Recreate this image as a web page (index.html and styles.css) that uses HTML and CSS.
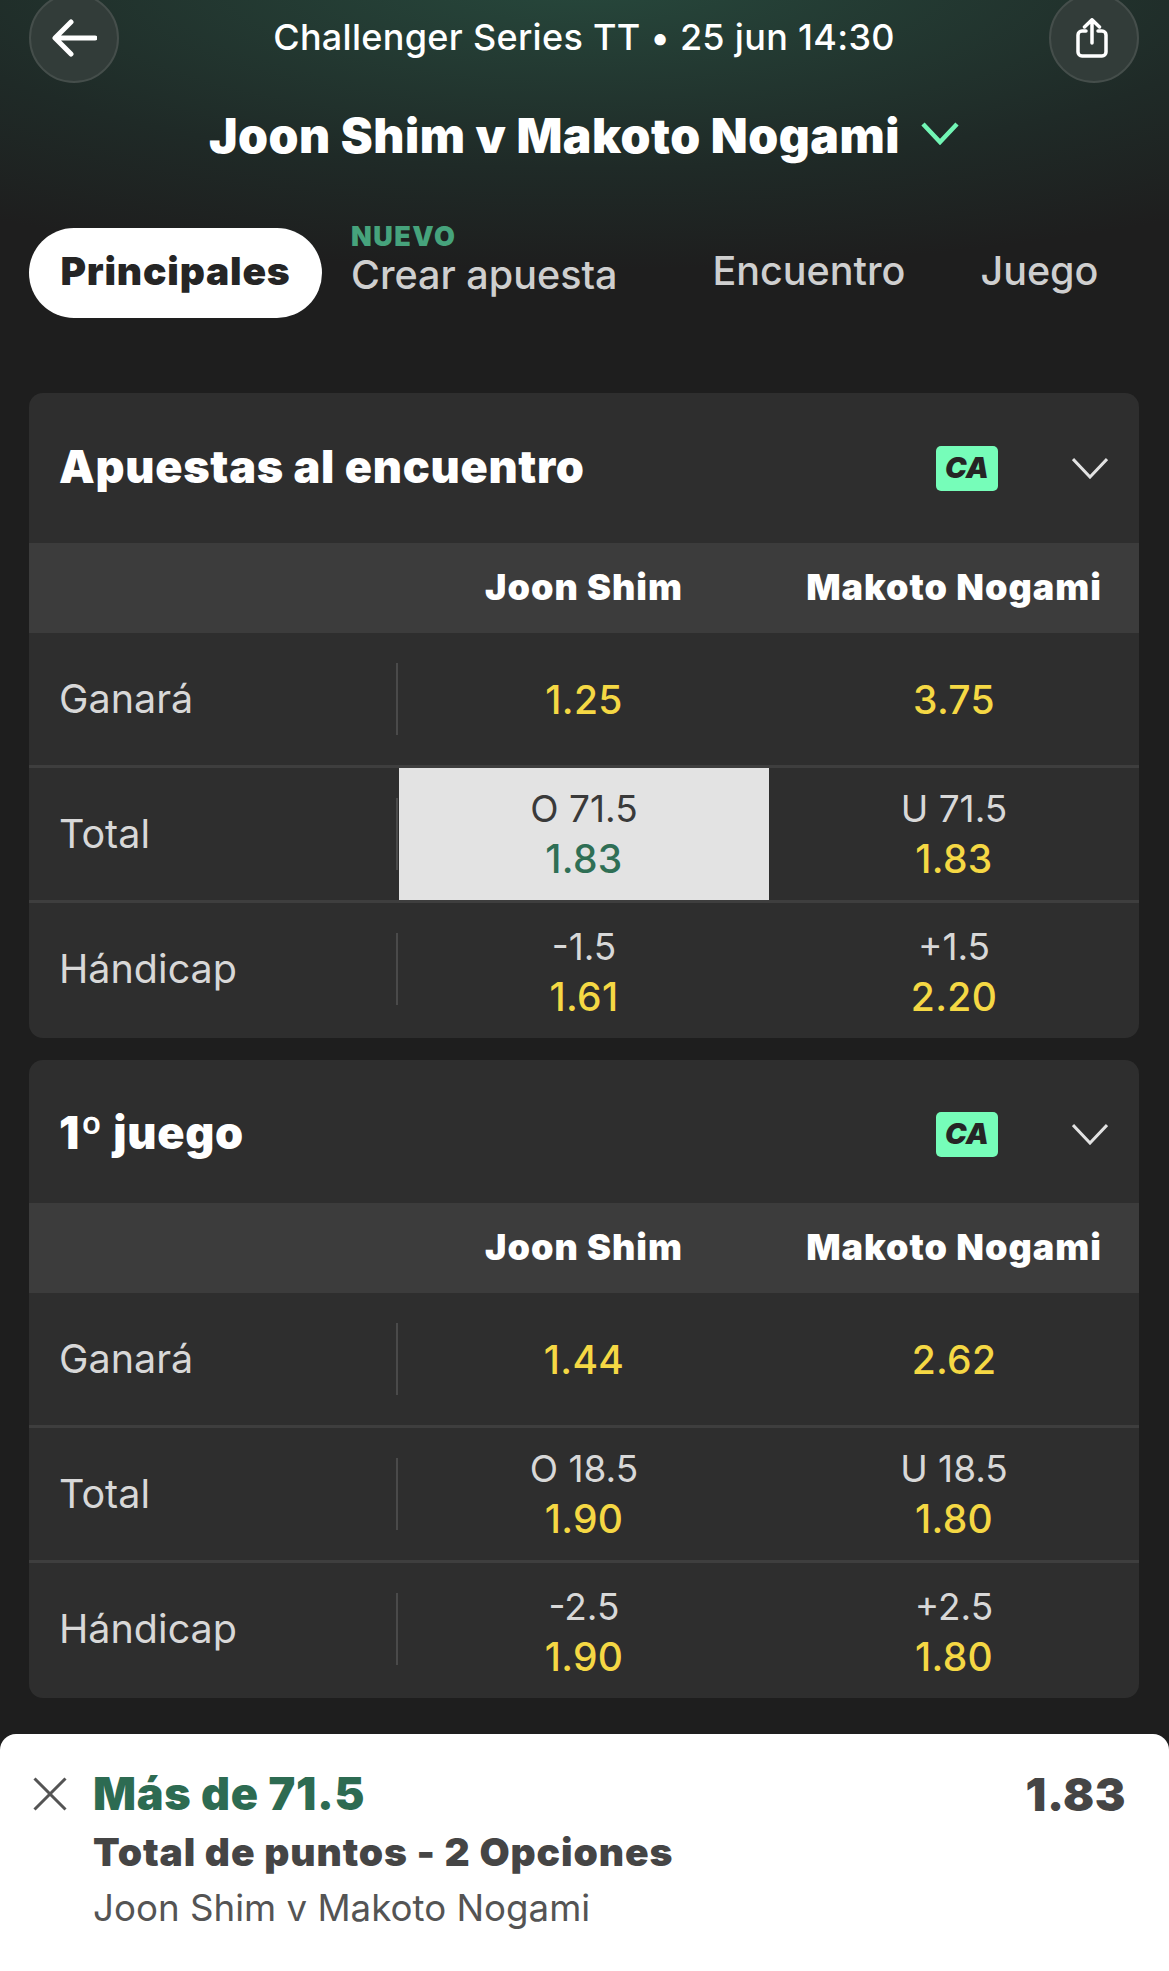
FILE: index.html
```html
<!DOCTYPE html>
<html lang="es">
<head>
    <meta charset="UTF-8">
    <title>Joon Shim v Makoto Nogami</title>
    <link rel="stylesheet" href="styles.css">
</head>
<body>
<div class="page">
    <div class="topbar">
        <button class="round-btn">
            <svg width="46" height="40" viewBox="0 0 46 40"><path d="M20 4 L4 20 L20 36 M5 20 H44" fill="none" stroke="#fff" stroke-width="5" stroke-linecap="round" stroke-linejoin="round"/></svg>
        </button>
        <div class="event-info">Challenger Series TT • 25 jun 14:30</div>
        <button class="round-btn">
            <svg class="share-icon" width="32" height="40" viewBox="0 0 32 40"><path d="M10 13 H6 a4 4 0 0 0 -4 4 V34 a4 4 0 0 0 4 4 H26 a4 4 0 0 0 4 -4 V17 a4 4 0 0 0 -4 -4 H22 M16 25 V2.500 M8.500 9 L16 1.800 L23.500 9" fill="none" stroke="#fff" stroke-width="3.500" stroke-linecap="round" stroke-linejoin="round"/></svg>
        </button>
    </div>

    <div class="match-title">
        <h1>Joon Shim v Makoto Nogami</h1>
        <svg class="title-chevron" width="38" height="24" viewBox="0 0 38 24"><path d="M2 3 L19 21 L36 3" fill="none" stroke="#72f5b5" stroke-width="4.500"/></svg>
    </div>

    <div class="tabs">
        <div class="tab tab-active">Principales</div>
        <div class="tab tab-new"><span class="new-label">NUEVO</span>Crear apuesta</div>
        <div class="tab tab-encuentro">Encuentro</div>
        <div class="tab tab-juego">Juego</div>
    </div>

    <section class="card">
        <div class="card-header">
            <h2>Apuestas al encuentro</h2>
            <span class="badge">CA</span>
            <svg class="card-chevron" width="36" height="22" viewBox="0 0 36 22"><path d="M1 2 L18 20 L35 2" fill="none" stroke="#e2e2e2" stroke-width="3"/></svg>
        </div>
        <div class="row row-head"><div></div><div>Joon Shim</div><div>Makoto Nogami</div></div>
        <div class="row">
            <div class="label">Ganará</div>
            <div class="cell"><span class="odds">1.25</span></div>
            <div class="cell"><span class="odds">3.75</span></div>
        </div>
        <div class="row row-line">
            <div class="label">Total</div>
            <div class="cell cell-selected"><span class="line">O 71.5</span><span class="odds">1.83</span></div>
            <div class="cell"><span class="line">U 71.5</span><span class="odds">1.83</span></div>
        </div>
        <div class="row row-line row-last">
            <div class="label">Hándicap</div>
            <div class="cell"><span class="line">-1.5</span><span class="odds">1.61</span></div>
            <div class="cell"><span class="line">+1.5</span><span class="odds">2.20</span></div>
        </div>
    </section>

    <section class="card card-second">
        <div class="card-header">
            <h2>1º juego</h2>
            <span class="badge">CA</span>
            <svg class="card-chevron" width="36" height="22" viewBox="0 0 36 22"><path d="M1 2 L18 20 L35 2" fill="none" stroke="#e2e2e2" stroke-width="3"/></svg>
        </div>
        <div class="row row-head"><div></div><div>Joon Shim</div><div>Makoto Nogami</div></div>
        <div class="row">
            <div class="label">Ganará</div>
            <div class="cell"><span class="odds">1.44</span></div>
            <div class="cell"><span class="odds">2.62</span></div>
        </div>
        <div class="row row-line">
            <div class="label">Total</div>
            <div class="cell"><span class="line">O 18.5</span><span class="odds">1.90</span></div>
            <div class="cell"><span class="line">U 18.5</span><span class="odds">1.80</span></div>
        </div>
        <div class="row row-line row-last">
            <div class="label">Hándicap</div>
            <div class="cell"><span class="line">-2.5</span><span class="odds">1.90</span></div>
            <div class="cell"><span class="line">+2.5</span><span class="odds">1.80</span></div>
        </div>
    </section>

    <div class="betslip">
        <svg class="slip-close" width="34" height="34" viewBox="0 0 34 34"><path d="M1.500 1.500 L32.500 32.500 M32.500 1.500 L1.500 32.500" fill="none" stroke="#545454" stroke-width="3"/></svg>
        <div class="slip-text">
            <div class="slip-pick">Más de 71.5</div>
            <div class="slip-market">Total de puntos - 2 Opciones</div>
            <div class="slip-match">Joon Shim v Makoto Nogami</div>
        </div>
        <div class="slip-odds">1.83</div>
    </div>
</div>
</body>
</html>
```

FILE: styles.css
```css
/* Global styles */
* {
    box-sizing: border-box;
}
body {
    margin: 0;
    background-color: #1e1e1e;
    font-family: Inter, "Liberation Sans", sans-serif;
    color: #fff;
}
h1, h2 {
    margin: 0;
}
.page {
    width: 1169px;
    height: 1971px;
    overflow: hidden;
    display: flex;
    flex-direction: column;
    background: radial-gradient(ellipse 1050px 290px at 50% -20px, #27483c 0, #1f2a27 65%, #1e1e1e 100%);
}

/* Top bar */
.topbar {
    height: 76px;
    flex-shrink: 0;
    padding: 0 30px 0 29px;
    display: flex;
    align-items: center;
    justify-content: space-between;
}
.round-btn {
    width: 90px;
    height: 90px;
    flex-shrink: 0;
    padding: 0;
    border-radius: 50%;
    border: 2px solid #454e4b;
    background-color: #323c39;
    display: flex;
    align-items: center;
    justify-content: center;
}
.share-icon {
    margin-right: 3px;
    margin-bottom: 1px;
}
.event-info {
    font-size: 36px;
    font-weight: 500;
    letter-spacing: 0.3px;
    white-space: nowrap;
    margin-bottom: 2px;
}

/* Title */
.match-title {
    margin-top: 30px;
    padding-left: 209px;
    height: 60px;
    display: flex;
    align-items: center;
}
.match-title h1 {
    font-size: 48px;
    font-weight: 900;
    letter-spacing: 0.5px;
    white-space: nowrap;
    margin-bottom: 2px;
}
.title-chevron {
    margin-left: 21px;
    margin-bottom: 6px;
}

/* Tabs */
.tabs {
    margin-top: 62px;
    padding-left: 29px;
    height: 90px;
    display: flex;
    align-items: center;
    flex-shrink: 0;
}
.tab {
    font-size: 39.5px;
    font-weight: 500;
    color: #cfcfcf;
    white-space: nowrap;
    margin-bottom: 4px;
}
.tab-active {
    width: 293px;
    height: 90px;
    margin-bottom: 0;
    padding-bottom: 6px;
    border-radius: 45px;
    background-color: #fff;
    color: #252525;
    font-size: 39px;
    font-weight: 900;
    letter-spacing: 0.8px;
    display: flex;
    align-items: center;
    justify-content: center;
}
.tab-new {
    margin-left: 29px;
    margin-bottom: 0;
    margin-top: -24px;
    display: flex;
    flex-direction: column;
}
.new-label {
    font-size: 27px;
    font-weight: 900;
    letter-spacing: 1.5px;
    line-height: 28px;
    color: #46a37c;
}
.tab-encuentro {
    margin-left: 95px;
}
.tab-juego {
    margin-left: 75px;
}

/* Market cards */
.card {
    margin: 75px 30px 0 29px;
    height: 645px;
    flex-shrink: 0;
    border-radius: 14px;
    overflow: hidden;
    background-color: #2e2e2e;
}
.card-second {
    margin-top: 22px;
    height: 638px;
}
.card-header {
    height: 150px;
    padding: 0 31px 0 30px;
    display: flex;
    align-items: center;
}
.card-second .card-header {
    height: 143px;
    padding-top: 5px;
}
.card-header h2 {
    font-size: 45px;
    font-weight: 900;
    letter-spacing: 0.7px;
    flex-grow: 1;
    margin-bottom: 4px;
}
.badge {
    width: 62px;
    height: 45px;
    border-radius: 5px;
    background-color: #76fdb9;
    color: #252525;
    font-size: 29px;
    font-weight: 900;
    font-style: italic;
    padding-bottom: 2px;
    display: flex;
    align-items: center;
    justify-content: center;
}
.card-chevron {
    margin-left: 74px;
}
.row {
    display: grid;
    grid-template-columns: 370px 1fr 1fr;
    height: 132px;
}
.row-line {
    height: 135px;
    border-top: 3px solid #3e3e3e;
}
.row-head {
    height: 90px;
    padding-bottom: 2px;
    background-color: #3c3c3c;
    align-items: center;
    text-align: center;
    font-size: 36px;
    font-weight: 900;
    letter-spacing: 1px;
    white-space: nowrap;
}
.label {
    padding-left: 30px;
    display: flex;
    align-items: center;
    justify-content: space-between;
    font-size: 39.5px;
    color: #d8d8d8;
}
.label::after {
    content: "";
    width: 2px;
    height: 72px;
    margin-right: 1px;
    background-color: #4a4a4a;
}
.cell {
    display: flex;
    flex-direction: column;
    align-items: center;
    justify-content: center;
}
.row-last .cell {
    padding-top: 5px;
}
.line {
    font-size: 37px;
    line-height: 49px;
    color: #d8d8d8;
}
.odds {
    font-size: 39px;
    font-weight: 500;
    letter-spacing: 0.3px;
    line-height: 51px;
    color: #f5d844;
}
.cell-selected {
    background-color: #e3e3e3;
}
.cell-selected .line {
    color: #3a3a3a;
}
.cell-selected .odds {
    color: #2f6f55;
}

/* Bet slip */
.betslip {
    margin-top: auto;
    height: 237px;
    flex-shrink: 0;
    padding: 0 43px 0 33px;
    border-radius: 16px 16px 0 0;
    background-color: #fff;
    display: flex;
    align-items: flex-start;
}
.slip-close {
    margin-top: 43px;
}
.slip-text {
    margin-left: 26px;
    margin-top: 30px;
    flex-grow: 1;
}
.slip-pick {
    font-size: 45px;
    font-weight: 900;
    letter-spacing: 0.7px;
    line-height: 60px;
    color: #2d6b52;
}
.slip-market {
    font-size: 39px;
    font-weight: 900;
    letter-spacing: 0.9px;
    line-height: 56px;
    color: #454545;
}
.slip-match {
    font-size: 36.7px;
    line-height: 56px;
    color: #545454;
}
.slip-odds {
    margin-top: 30px;
    font-size: 46px;
    font-weight: 900;
    letter-spacing: 0.5px;
    line-height: 60px;
    color: #454545;
}
```
